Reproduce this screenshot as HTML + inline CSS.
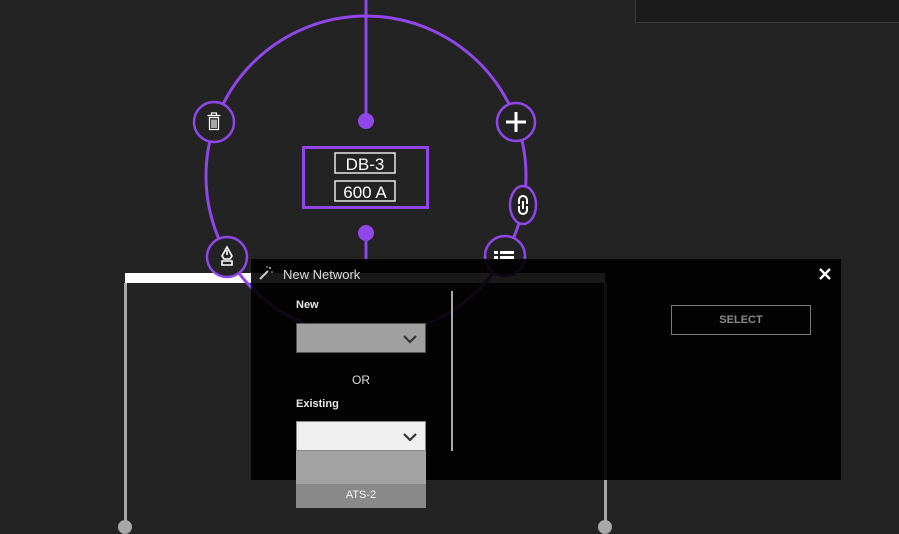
<!DOCTYPE html>
<html><head><meta charset="utf-8">
<style>
*{margin:0;padding:0;box-sizing:border-box}
html,body{width:899px;height:527px;overflow:hidden;background:#232323;font-family:"Liberation Sans",sans-serif}
.abs{position:absolute}
</style></head><body>
<div class="abs" style="left:635px;top:0;width:264px;height:23px;background:#1b1b1b;border-left:1px solid #3c3c3c;border-bottom:1px solid #3c3c3c"></div>

<div class="abs" style="left:125px;top:273px;width:480px;height:10px;background:#fff"></div>
<div class="abs" style="left:124px;top:283px;width:3px;height:244px;background:#a8a8a8"></div>
<div class="abs" style="left:604px;top:283px;width:3px;height:244px;background:#a8a8a8"></div>
<div class="abs" style="left:118px;top:520px;width:14px;height:14px;border-radius:50%;background:#a8a8a8"></div>
<div class="abs" style="left:598px;top:520px;width:14px;height:14px;border-radius:50%;background:#a8a8a8"></div>

<svg class="abs" style="left:0;top:0" width="899" height="527">
<g stroke="#9146ea" fill="none" stroke-width="3">
<circle cx="366" cy="176" r="160"/>
<line x1="366" y1="0" x2="366" y2="121"/>
<line x1="366" y1="233" x2="366" y2="262"/>
<rect x="303.5" y="147.5" width="124" height="60"/>
</g>
<circle cx="366" cy="121" r="8" fill="#9146ea"/>
<circle cx="366" cy="233" r="8" fill="#9146ea"/>
<rect x="335" y="153" width="60" height="20" fill="none" stroke="#e8e8e8" stroke-width="1.5"/>
<rect x="335" y="181" width="60" height="20" fill="none" stroke="#e8e8e8" stroke-width="1.5"/>
<text x="365" y="170" font-size="17" fill="#fff" text-anchor="middle" font-family="Liberation Sans">DB-3</text>
<text x="365" y="198" font-size="17" fill="#fff" text-anchor="middle" font-family="Liberation Sans">600 A</text>
<g fill="#232323" stroke="#9146ea" stroke-width="2.5">
<circle cx="214" cy="122" r="20"/>
<circle cx="516" cy="122" r="19"/>
<ellipse cx="523" cy="205" rx="13" ry="19"/>
<circle cx="227" cy="257" r="20"/>
<circle cx="505" cy="256" r="20"/>
</g>
<g fill="none" stroke="#fff" stroke-width="1.2">
<path d="M207.5 115.5h13M211.5 115v-2h5v2"/>
<rect x="209.5" y="117.5" width="9" height="12"/>
<path d="M212 119.5v8.5M214 119.5v8.5M216 119.5v8.5"/>
</g>
<path d="M506 122h20M516 112v20" stroke="#fff" stroke-width="3"/>
<g fill="none" stroke="#fff" stroke-width="2">
<path d="M519 204v-4a4 4 0 0 1 8 0v4M527 206v4a4 4 0 0 1 -8 0v-4M523 201v8"/>
</g>
<g fill="none" stroke="#fff" stroke-width="1.6">
<path d="M227 247l-5 9 2 3h6l2-3z"/><path d="M222 261h10v4h-10z"/><path d="M227 250v5"/>
</g>
<g fill="#fff"><rect x="494" y="251" width="4" height="3"/><rect x="500" y="251" width="14" height="3"/><rect x="494" y="256" width="4" height="3"/><rect x="500" y="256" width="14" height="3"/></g>
</svg>

<div class="abs" style="left:251px;top:259px;width:590px;height:221px;background:rgba(0,0,0,0.9)"></div>
<svg class="abs" style="left:258px;top:265px" width="16" height="16"><path d="M2 14l8-8" stroke="#ccc" stroke-width="2"/><g fill="#ccc"><circle cx="12" cy="3" r="1"/><circle cx="14" cy="7" r="0.8"/><circle cx="9" cy="2" r="0.8"/></g></svg>
<div class="abs" style="left:283px;top:267px;font-size:13px;color:#ddd">New Network</div>
<svg class="abs" style="left:819px;top:268px" width="12" height="12"><path d="M1 1l10 10M11 1L1 11" stroke="#fff" stroke-width="2.4"/></svg>
<div class="abs" style="left:296px;top:299px;font-size:11px;font-weight:bold;color:#e8e8e8">New</div>
<div class="abs" style="left:296px;top:323px;width:130px;height:30px;background:#a0a0a0;border:1.5px solid #555"></div>
<svg class="abs" style="left:403px;top:334px" width="14" height="10"><path d="M1 2l6 6 6-6" fill="none" stroke="#333" stroke-width="2.2"/></svg>
<div class="abs" style="left:352px;top:373px;font-size:12px;color:#ddd">OR</div>
<div class="abs" style="left:296px;top:398px;font-size:11px;font-weight:bold;color:#e8e8e8">Existing</div>
<div class="abs" style="left:296px;top:421px;width:130px;height:30px;background:#efefef;border:1px solid #888"></div>
<svg class="abs" style="left:403px;top:432px" width="14" height="10"><path d="M1 2l6 6 6-6" fill="none" stroke="#333" stroke-width="2.2"/></svg>
<div class="abs" style="left:296px;top:451px;width:130px;height:33px;background:#a3a3a3"></div>
<div class="abs" style="left:296px;top:484px;width:130px;height:24px;background:#898989;color:#f4f4f4;font-size:11px;text-align:center;line-height:22px">ATS-2</div>
<div class="abs" style="left:451px;top:291px;width:2px;height:160px;background:#aaa"></div>
<div class="abs" style="left:671px;top:305px;width:140px;height:30px;border:1px solid #777;color:#8a8a8a;font-size:11px;font-weight:bold;text-align:center;line-height:28px">SELECT</div>
</body></html>
